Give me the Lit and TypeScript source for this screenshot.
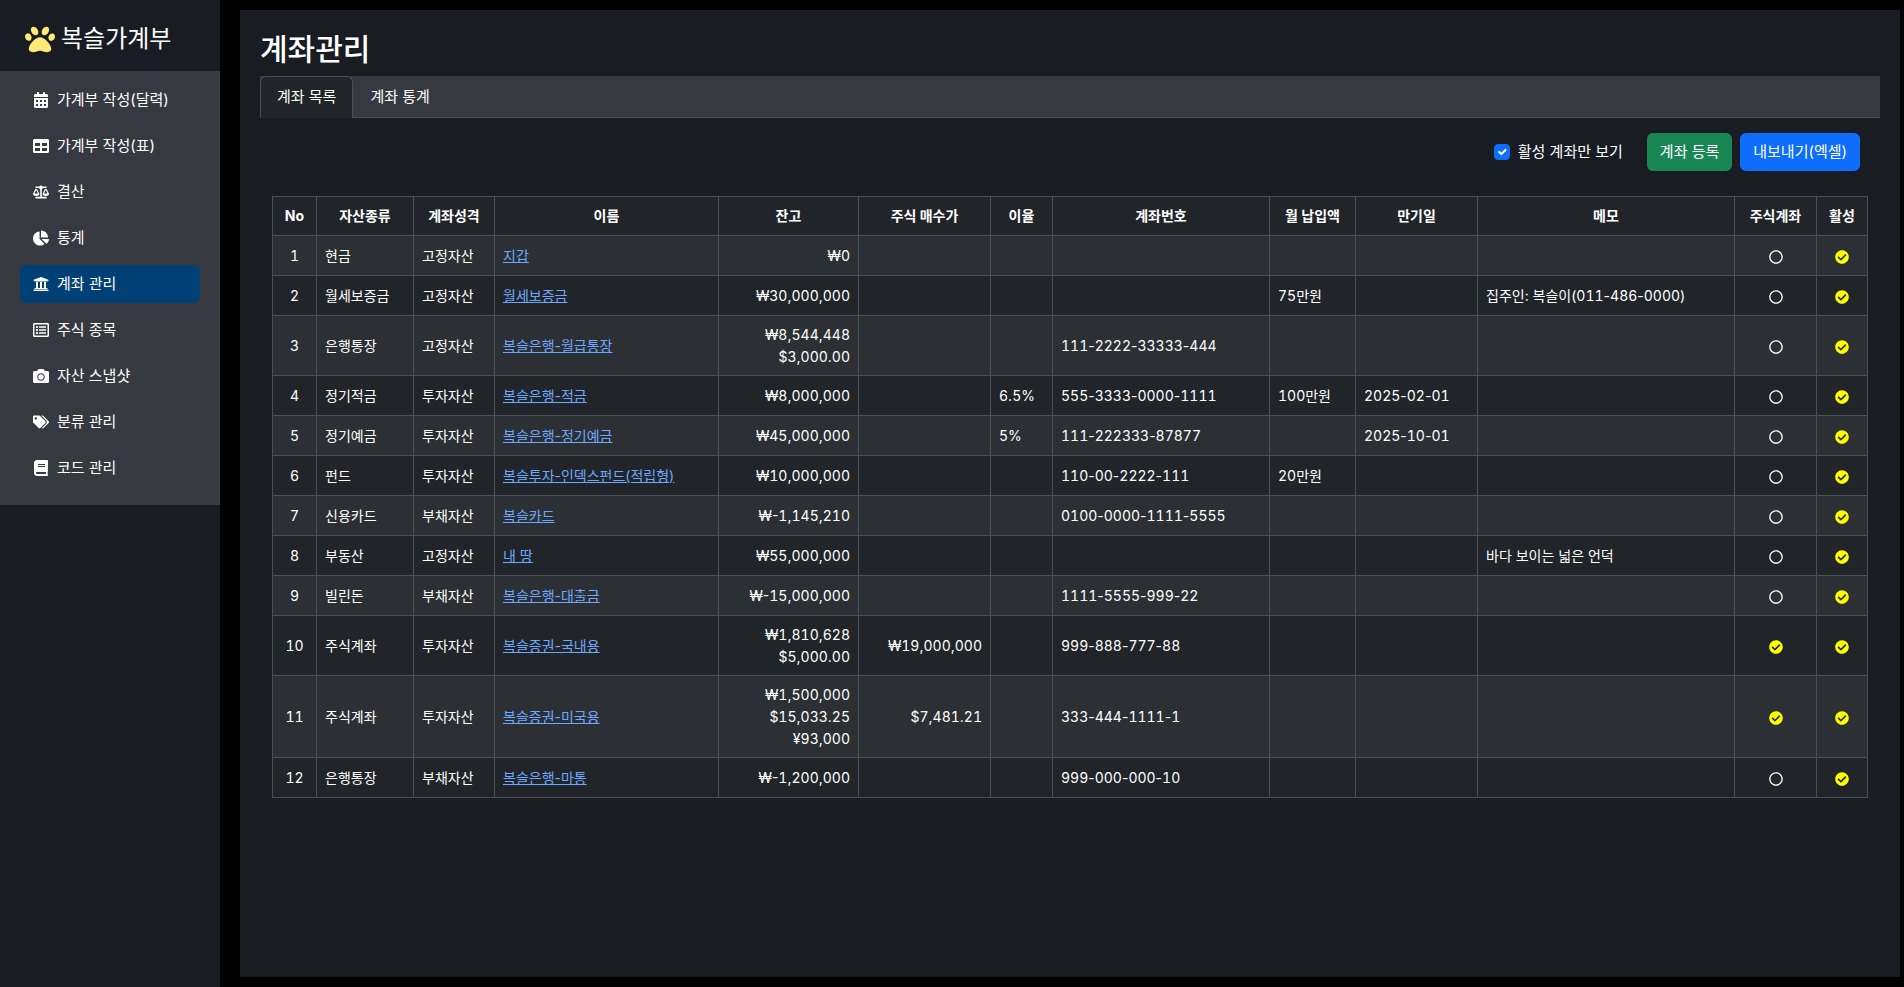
import { LitElement, html, css, svg, nothing } from "lit";
import { customElement, property, state } from "lit/decorators.js";
import { classMap } from "lit/directives/class-map.js";

interface Glyph {
  w: number;
  h: number;
  d: string;
}

const GLYPHS: Record<string, Glyph> = {
  paw: {
    w: 512,
    h: 512,
    d: "M256 224c-79.41 0-192 122.76-192 200.25 0 34.9 26.81 55.75 71.74 55.75 48.84 0 81.09-25.08 120.26-25.08 39.51 0 71.85 25.08 120.26 25.08 44.93 0 71.74-20.85 71.74-55.75C448 346.76 335.41 224 256 224zm-147.28-12.61c-10.4-34.65-42.44-57.09-71.56-50.13-29.12 6.96-44.29 40.69-33.89 75.34 10.4 34.65 42.44 57.09 71.56 50.13 29.12-6.96 44.29-40.69 33.89-75.34zm84.72-20.78c30.94-8.14 42.93-46.5 26.78-85.7-16.15-39.19-54.33-64.37-85.27-56.23-30.94 8.14-42.93 46.5-26.78 85.7 16.15 39.19 54.33 64.37 85.27 56.23zm281.39-29.34c-29.12-6.96-61.15 15.48-71.56 50.13-10.4 34.65 4.77 68.38 33.89 75.34 29.12 6.96 61.15-15.48 71.56-50.13 10.4-34.65-4.77-68.38-33.89-75.34zm-156.27 29.34c30.94 8.14 69.11-17.04 85.27-56.23 16.15-39.19 4.17-77.56-26.78-85.7-30.94-8.14-69.11 17.04-85.27 56.23-16.15 39.2-4.17 77.56 26.78 85.7z",
  },
  calendar: {
    w: 448,
    h: 512,
    d: "M0 464c0 26.5 21.5 48 48 48h352c26.5 0 48-21.5 48-48V192H0v272zm320-196c0-6.6 5.4-12 12-12h40c6.6 0 12 5.4 12 12v40c0 6.6-5.4 12-12 12h-40c-6.6 0-12-5.4-12-12v-40zm0 128c0-6.6 5.4-12 12-12h40c6.6 0 12 5.4 12 12v40c0 6.6-5.4 12-12 12h-40c-6.6 0-12-5.4-12-12v-40zM192 268c0-6.6 5.4-12 12-12h40c6.6 0 12 5.4 12 12v40c0 6.6-5.4 12-12 12h-40c-6.6 0-12-5.4-12-12v-40zm0 128c0-6.6 5.4-12 12-12h40c6.6 0 12 5.4 12 12v40c0 6.6-5.4 12-12 12h-40c-6.6 0-12-5.4-12-12v-40zM64 268c0-6.6 5.4-12 12-12h40c6.6 0 12 5.4 12 12v40c0 6.6-5.4 12-12 12H76c-6.6 0-12-5.4-12-12v-40zm0 128c0-6.6 5.4-12 12-12h40c6.6 0 12 5.4 12 12v40c0 6.6-5.4 12-12 12H76c-6.6 0-12-5.4-12-12v-40zM400 64h-48V16c0-8.8-7.2-16-16-16h-32c-8.8 0-16 7.2-16 16v48H160V16c0-8.8-7.2-16-16-16h-32c-8.8 0-16 7.2-16 16v48H48C21.5 64 0 85.5 0 112v48h448v-48c0-26.5-21.5-48-48-48z",
  },
  table: {
    w: 512,
    h: 512,
    d: "M464 32H48C21.49 32 0 53.49 0 80v352c0 26.51 21.49 48 48 48h416c26.51 0 48-21.49 48-48V80c0-26.51-21.49-48-48-48zM224 416H64v-96h160v96zm0-160H64v-96h160v96zm224 160H288v-96h160v96zm0-160H288v-96h160v96z",
  },
  scale: {
    w: 640,
    h: 512,
    d: "M256 336h-.02c0-16.18 1.34-8.73-85.05-181.51-17.65-35.29-68.19-35.36-85.87 0C-2.06 328.75.02 320.33.02 336H0c0 44.18 57.31 80 128 80s128-35.82 128-80zM128 176l72 144H56l72-144zm511.98 160c0-16.18 1.34-8.73-85.05-181.51-17.65-35.29-68.19-35.36-85.87 0-87.12 174.26-85.04 165.84-85.04 181.51H384c0 44.18 57.31 80 128 80s128-35.82 128-80h-.02zM440 320l72-144 72 144H440zm88 128H352V153.25c23.51-10.29 41.16-31.48 46.39-57.25H528c8.84 0 16-7.16 16-16V48c0-8.84-7.16-16-16-16H383.64C369.04 12.68 346.09 0 320 0s-49.04 12.68-63.64 32H112c-8.84 0-16 7.16-16 16v32c0 8.84 7.16 16 16 16h129.61c5.23 25.76 22.87 46.96 46.39 57.25V448H112c-8.84 0-16 7.16-16 16v32c0 8.84 7.16 16 16 16h416c8.84 0 16-7.16 16-16v-32c0-8.84-7.16-16-16-16z",
  },
  pie: {
    w: 544,
    h: 512,
    d: "M527.79 288H290.5l158.03 158.03c6.04 6.04 15.98 6.53 22.19.68 38.7-36.46 65.32-85.61 73.13-140.86 1.34-9.46-6.51-17.85-16.06-17.85zm-15.83-64.8C503.72 103.74 408.26 8.28 288.8.04 279.68-.59 272 7.1 272 16.24V240h223.77c9.14 0 16.82-7.68 16.19-16.8zM224 288V50.71c0-9.55-8.39-17.4-17.84-16.06C86.99 51.49-4.1 155.6.14 280.37 4.5 408.51 114.83 513.59 243.03 511.98c50.4-.63 96.97-16.87 135.26-44.03 7.9-5.6 8.42-17.23 1.57-24.08L224 288z",
  },
  bank: {
    w: 512,
    h: 512,
    d: "M496 128v16a8 8 0 0 1-8 8h-24v12c0 6.627-5.373 12-12 12H60c-6.627 0-12-5.373-12-12v-12H24a8 8 0 0 1-8-8v-16a8 8 0 0 1 4.941-7.392l232-88a7.996 7.996 0 0 1 6.118 0l232 88A8 8 0 0 1 496 128zm-24 304H40c-13.255 0-24 10.745-24 24v16a8 8 0 0 0 8 8h464a8 8 0 0 0 8-8v-16c0-13.255-10.745-24-24-24zM96 192v192H60c-6.627 0-12 5.373-12 12v20h416v-20c0-6.627-5.373-12-12-12h-36V192h-64v192h-64V192h-64v192h-64V192H96z",
  },
  list: {
    w: 512,
    h: 512,
    d: "M464 32H48C21.49 32 0 53.49 0 80v352c0 26.51 21.49 48 48 48h416c26.51 0 48-21.49 48-48V80c0-26.51-21.49-48-48-48zm-6 400H54a6 6 0 0 1-6-6V86a6 6 0 0 1 6-6h404a6 6 0 0 1 6 6v340a6 6 0 0 1-6 6zm-42-92v24c0 6.627-5.373 12-12 12H204c-6.627 0-12-5.373-12-12v-24c0-6.627 5.373-12 12-12h200c6.627 0 12 5.373 12 12zm0-96v24c0 6.627-5.373 12-12 12H204c-6.627 0-12-5.373-12-12v-24c0-6.627 5.373-12 12-12h200c6.627 0 12 5.373 12 12zm0-96v24c0 6.627-5.373 12-12 12H204c-6.627 0-12-5.373-12-12v-24c0-6.627 5.373-12 12-12h200c6.627 0 12 5.373 12 12zm-252 12c0 19.882-16.118 36-36 36s-36-16.118-36-36 16.118-36 36-36 36 16.118 36 36zm0 96c0 19.882-16.118 36-36 36s-36-16.118-36-36 16.118-36 36-36 36 16.118 36 36zm0 96c0 19.882-16.118 36-36 36s-36-16.118-36-36 16.118-36 36-36 36 16.118 36 36z",
  },
  camera: {
    w: 512,
    h: 512,
    d: "M512 144v288c0 26.5-21.5 48-48 48H48c-26.5 0-48-21.5-48-48V144c0-26.5 21.5-48 48-48h88l12.3-32.9c7-18.7 24.9-31.1 44.9-31.1h125.5c20 0 37.9 12.4 44.9 31.1L376 96h88c26.5 0 48 21.5 48 48zM376 288c0-66.2-53.8-120-120-120s-120 53.8-120 120 53.8 120 120 120 120-53.8 120-120zm-32 0c0 48.5-39.5 88-88 88s-88-39.5-88-88 39.5-88 88-88 88 39.5 88 88z",
  },
  tags: {
    w: 640,
    h: 512,
    d: "M497.941 225.941L286.059 14.059A48 48 0 0 0 252.118 0H48C21.49 0 0 21.49 0 48v204.118a48 48 0 0 0 14.059 33.941l211.882 211.882c18.744 18.745 49.136 18.746 67.882 0l204.118-204.118c18.745-18.745 18.745-49.137 0-67.882zM112 160c-26.51 0-48-21.49-48-48s21.49-48 48-48 48 21.49 48 48-21.49 48-48 48zm513.941 133.823L421.823 497.941c-18.745 18.745-49.137 18.745-67.882 0l-.36-.36L527.64 323.522c16.999-16.999 26.36-39.6 26.36-63.64s-9.362-46.641-26.36-63.64L331.397 0h48.721a48 48 0 0 1 33.941 14.059l211.882 211.882c18.745 18.745 18.745 49.137 0 67.882z",
  },
  book: {
    w: 448,
    h: 512,
    d: "M448 360V24c0-13.3-10.7-24-24-24H96C43 0 0 43 0 96v320c0 53 43 96 96 96h328c13.3 0 24-10.7 24-24v-16c0-7.5-3.5-14.3-8.9-18.7-4.2-15.4-4.2-59.3 0-74.7 5.4-4.3 8.9-11.1 8.9-18.6zM128 134c0-3.3 2.7-6 6-6h212c3.3 0 6 2.7 6 6v20c0 3.3-2.7 6-6 6H134c-3.3 0-6-2.7-6-6v-20zm0 64c0-3.3 2.7-6 6-6h212c3.3 0 6 2.7 6 6v20c0 3.3-2.7 6-6 6H134c-3.3 0-6-2.7-6-6v-20zm253.4 250H96c-17.7 0-32-14.3-32-32 0-17.6 14.4-32 32-32h285.4c-1.9 17.1-1.9 46.9 0 64z",
  },
  check: {
    w: 512,
    h: 512,
    d: "M504 256c0 136.967-111.033 248-248 248S8 392.967 8 256 119.033 8 256 8s248 111.033 248 248zM227.314 387.314l184-184c6.248-6.248 6.248-16.379 0-22.627l-22.627-22.627c-6.248-6.249-16.379-6.249-22.628 0L216 308.118l-70.059-70.059c-6.248-6.248-16.379-6.248-22.628 0l-22.627 22.627c-6.248 6.248-6.248 16.379 0 22.627l104 104c6.249 6.249 16.379 6.249 22.628.001z",
  },
  circle: {
    w: 512,
    h: 512,
    d: "M256 8C119 8 8 119 8 256s111 248 248 248 248-111 248-248S393 8 256 8zm0 448c-110.5 0-200-89.5-200-200S145.500 56 256 56s200 89.500 200 200-89.500 200-200 200z",
  },
};

@customElement("glyph-icon")
export class GlyphIcon extends LitElement {
  static styles = css`
    :host {
      display: inline-flex;
      width: 16px;
      height: 16px;
      justify-content: center;
    }
    .glyph {
      width: 100%;
      height: 100%;
      fill: currentColor;
    }
  `;

  @property() name = "circle";

  render() {
    const glyph = GLYPHS[this.name];
    return html`<svg class="glyph" viewBox="0 0 ${glyph.w} ${glyph.h}" aria-hidden="true">
      ${svg`<path d=${glyph.d}></path>`}
    </svg>`;
  }
}

const MENU = [
  { icon: "calendar", label: "가계부 작성(달력)" },
  { icon: "table", label: "가계부 작성(표)" },
  { icon: "scale", label: "결산" },
  { icon: "pie", label: "통계" },
  { icon: "bank", label: "계좌 관리" },
  { icon: "list", label: "주식 종목" },
  { icon: "camera", label: "자산 스냅샷" },
  { icon: "tags", label: "분류 관리" },
  { icon: "book", label: "코드 관리" },
];

@customElement("side-menu")
export class SideMenu extends LitElement {
  static styles = css`
    :host {
      display: block;
      background: #1a1c24;
      color: #fff;
    }
    .brand {
      display: flex;
      align-items: center;
      gap: 6px;
      height: 71px;
      padding: 6px 25px 0;
      box-sizing: border-box;
      color: inherit;
      font-size: 24px;
      line-height: 34px;
      text-decoration: none;
    }
    .paw {
      width: 30px;
      height: 30px;
      color: #ffec78;
    }
    .menu {
      display: flex;
      flex-direction: column;
      gap: 8px;
      margin: 0;
      padding: 10px 20px 18px;
      list-style: none;
      background: #363940;
    }
    .item {
      display: flex;
      align-items: center;
      gap: 8px;
      padding: 7px 13px;
      border-radius: 6px;
      color: inherit;
      font-size: 15px;
      line-height: 24px;
      text-decoration: none;
    }
    .current {
      background: #004074;
    }
  `;

  @state() private current = "계좌 관리";

  render() {
    return html`
      <a class="brand" href="#home">
        <glyph-icon class="paw" name="paw"></glyph-icon>
        <span>복슬가계부</span>
      </a>
      <nav>
        <ul class="menu">
          ${MENU.map(
            (entry) => html`<li>
              <a
                class=${classMap({ item: true, current: entry.label === this.current })}
                href="#"
                @click=${() => (this.current = entry.label)}
              >
                <glyph-icon name=${entry.icon}></glyph-icon>
                <span>${entry.label}</span>
              </a>
            </li>`,
          )}
        </ul>
      </nav>
    `;
  }
}

interface Account {
  kind: string;
  type: string;
  name: string;
  balance: string[];
  cost?: string;
  rate?: string;
  number?: string;
  monthly?: string;
  expires?: string;
  memo?: string;
  stock?: boolean;
}

const ACCOUNTS: Account[] = [
  { kind: "현금", type: "고정자산", name: "지갑", balance: ["₩0"] },
  { kind: "월세보증금", type: "고정자산", name: "월세보증금", balance: ["₩30,000,000"], monthly: "75만원", memo: "집주인: 복슬이(011-486-0000)" },
  { kind: "은행통장", type: "고정자산", name: "복슬은행-월급통장", balance: ["₩8,544,448", "$3,000.00"], number: "111-2222-33333-444" },
  { kind: "정기적금", type: "투자자산", name: "복슬은행-적금", balance: ["₩8,000,000"], rate: "6.5%", number: "555-3333-0000-1111", monthly: "100만원", expires: "2025-02-01" },
  { kind: "정기예금", type: "투자자산", name: "복슬은행-정기예금", balance: ["₩45,000,000"], rate: "5%", number: "111-222333-87877", expires: "2025-10-01" },
  { kind: "펀드", type: "투자자산", name: "복슬투자-인덱스펀드(적립형)", balance: ["₩10,000,000"], number: "110-00-2222-111", monthly: "20만원" },
  { kind: "신용카드", type: "부채자산", name: "복슬카드", balance: ["₩-1,145,210"], number: "0100-0000-1111-5555" },
  { kind: "부동산", type: "고정자산", name: "내 땅", balance: ["₩55,000,000"], memo: "바다 보이는 넓은 언덕" },
  { kind: "빌린돈", type: "부채자산", name: "복슬은행-대출금", balance: ["₩-15,000,000"], number: "1111-5555-999-22" },
  { kind: "주식계좌", type: "투자자산", name: "복슬증권-국내용", balance: ["₩1,810,628", "$5,000.00"], cost: "₩19,000,000", number: "999-888-777-88", stock: true },
  { kind: "주식계좌", type: "투자자산", name: "복슬증권-미국용", balance: ["₩1,500,000", "$15,033.25", "¥93,000"], cost: "$7,481.21", number: "333-444-1111-1", stock: true },
  { kind: "은행통장", type: "부채자산", name: "복슬은행-마통", balance: ["₩-1,200,000"], number: "999-000-000-10" },
];

const COLUMNS: [string, number][] = [
  ["No", 44],
  ["자산종류", 97],
  ["계좌성격", 81],
  ["이름", 224],
  ["잔고", 140],
  ["주식 매수가", 132],
  ["이율", 62],
  ["계좌번호", 217],
  ["월 납입액", 86],
  ["만기일", 122],
  ["메모", 257],
  ["주식계좌", 82],
  ["활성", 51],
];

@customElement("account-table")
export class AccountTable extends LitElement {
  static styles = css`
    :host {
      display: block;
    }
    .grid {
      width: 100%;
      table-layout: fixed;
      border-collapse: collapse;
      background: #212529;
      color: #fff;
      font-size: 14px;
      line-height: 22px;
    }
    .grid th,
    .grid td {
      padding: 7px 8px;
      border: 1px solid #4d5154;
      text-align: left;
      vertical-align: middle;
      overflow-wrap: anywhere;
    }
    .grid th {
      padding: 8px 4px;
      font-weight: 700;
      text-align: center;
    }
    .row {
      height: 40px;
    }
    .row:nth-child(odd) {
      background: #2c3034;
    }
    .double {
      height: 60px;
    }
    .triple {
      height: 82px;
    }
    .grid .center {
      text-align: center;
    }
    .grid .amount {
      text-align: right;
    }
    .digits {
      font-variant-numeric: tabular-nums;
    }
    .link {
      color: #6ea8fe;
    }
    .flag {
      width: 14px;
      height: 14px;
      vertical-align: -3px;
    }
    .on {
      color: #ff0;
    }
  `;

  private flag(on: boolean) {
    return html`<glyph-icon
      class=${classMap({ flag: true, on })}
      name=${on ? "check" : "circle"}
      role="img"
      aria-label=${on ? "예" : "아니오"}
    ></glyph-icon>`;
  }

  /** Digits get equal widths; separators around them keep their own. */
  private figures(text?: string) {
    if (!text) return nothing;
    return text
      .split(/(\d+)/)
      .filter(Boolean)
      .map((part) => (/\d/.test(part) ? html`<span class="digits">${part}</span>` : part));
  }

  render() {
    return html`<table class="grid">
      <colgroup>
        ${COLUMNS.map(([, width]) => html`<col style="width:${width}px" />`)}
      </colgroup>
      <thead>
        <tr>
          ${COLUMNS.map(([label]) => html`<th scope="col">${label}</th>`)}
        </tr>
      </thead>
      <tbody>
        ${ACCOUNTS.map(
          (a, i) => html`<tr
            class=${classMap({
              row: true,
              double: a.balance.length === 2,
              triple: a.balance.length === 3,
            })}
          >
            <td class="center digits">${i + 1}</td>
            <td>${a.kind}</td>
            <td>${a.type}</td>
            <td><a class="link" href="#account">${a.name}</a></td>
            <td class="amount">${a.balance.map((b) => html`<div>${this.figures(b)}</div>`)}</td>
            <td class="amount">${this.figures(a.cost)}</td>
            <td>${this.figures(a.rate)}</td>
            <td>${this.figures(a.number)}</td>
            <td>${this.figures(a.monthly)}</td>
            <td>${this.figures(a.expires)}</td>
            <td>${this.figures(a.memo)}</td>
            <td class="center">${this.flag(!!a.stock)}</td>
            <td class="center">${this.flag(true)}</td>
          </tr>`,
        )}
      </tbody>
    </table>`;
  }
}

@customElement("app-root")
export class AppRoot extends LitElement {
  static styles = css`
    :host {
      display: grid;
      grid-template-columns: 220px minmax(0, 1fr);
      gap: 20px;
      min-height: 100vh;
      background: #000;
      color: #fff;
      font-family: Inter, "Noto Sans CJK KR", sans-serif;
      font-weight: 400;
    }
    .page {
      margin: 10px 4px 10px 0;
      padding: 19px 20px 20px;
      background: #1a1c24;
    }
    .title {
      margin: 0 0 7px;
      font-size: 30px;
      font-weight: 500;
      line-height: 40px;
    }
    .tabs {
      display: flex;
      background: #363940;
      box-shadow: inset 0 -1px #495057;
    }
    .tab {
      padding: 7px 16px 9px;
      border: 1px solid transparent;
      border-bottom: 0;
      border-radius: 6px 6px 0 0;
      background: none;
      color: inherit;
      font: inherit;
      font-size: 15px;
      line-height: 25px;
    }
    .selected {
      border-color: #495057;
      background: #212529;
    }
    .tools {
      display: flex;
      align-items: center;
      justify-content: flex-end;
      gap: 8px;
      padding: 15px 20px 25px;
      font-size: 15px;
    }
    .filter {
      display: flex;
      align-items: center;
      gap: 8px;
      margin-right: 16px;
      line-height: 24px;
    }
    .tick {
      appearance: none;
      width: 16px;
      height: 16px;
      margin: 0;
      border: 1px solid #495057;
      border-radius: 4px;
    }
    .tick:checked {
      border-color: #0d6efd;
      background: #0d6efd
        url("data:image/svg+xml,%3Csvg xmlns='http://www.w3.org/2000/svg' viewBox='0 0 20 20'%3E%3Cpath fill='none' stroke='%23fff' stroke-linecap='round' stroke-linejoin='round' stroke-width='3' d='m6 10 3 3 6-6'/%3E%3C/svg%3E")
        center / contain no-repeat;
    }
    .action {
      padding: 6px 12px;
      border: 1px solid transparent;
      border-radius: 6px;
      color: #fff;
      font: inherit;
      line-height: 24px;
    }
    .add {
      background: #198754;
    }
    .export {
      background: #0d6efd;
    }
    .list {
      margin: 0 12px;
    }
  `;

  @state() private tab = "계좌 목록";

  render() {
    return html`
      <side-menu></side-menu>
      <main class="page">
        <h1 class="title">계좌관리</h1>
        <div class="tabs" role="tablist">
          ${["계좌 목록", "계좌 통계"].map(
            (label) => html`<button
              class=${classMap({ tab: true, selected: label === this.tab })}
              role="tab"
              aria-selected=${label === this.tab}
              @click=${() => (this.tab = label)}
            >
              ${label}
            </button>`,
          )}
        </div>
        <div class="tools">
          <label class="filter" for="active-only">
            <input class="tick" type="checkbox" id="active-only" checked />
            활성 계좌만 보기
          </label>
          <button class="action add">계좌 등록</button>
          <button class="action export">내보내기(엑셀)</button>
        </div>
        <account-table class="list"></account-table>
      </main>
    `;
  }
}
